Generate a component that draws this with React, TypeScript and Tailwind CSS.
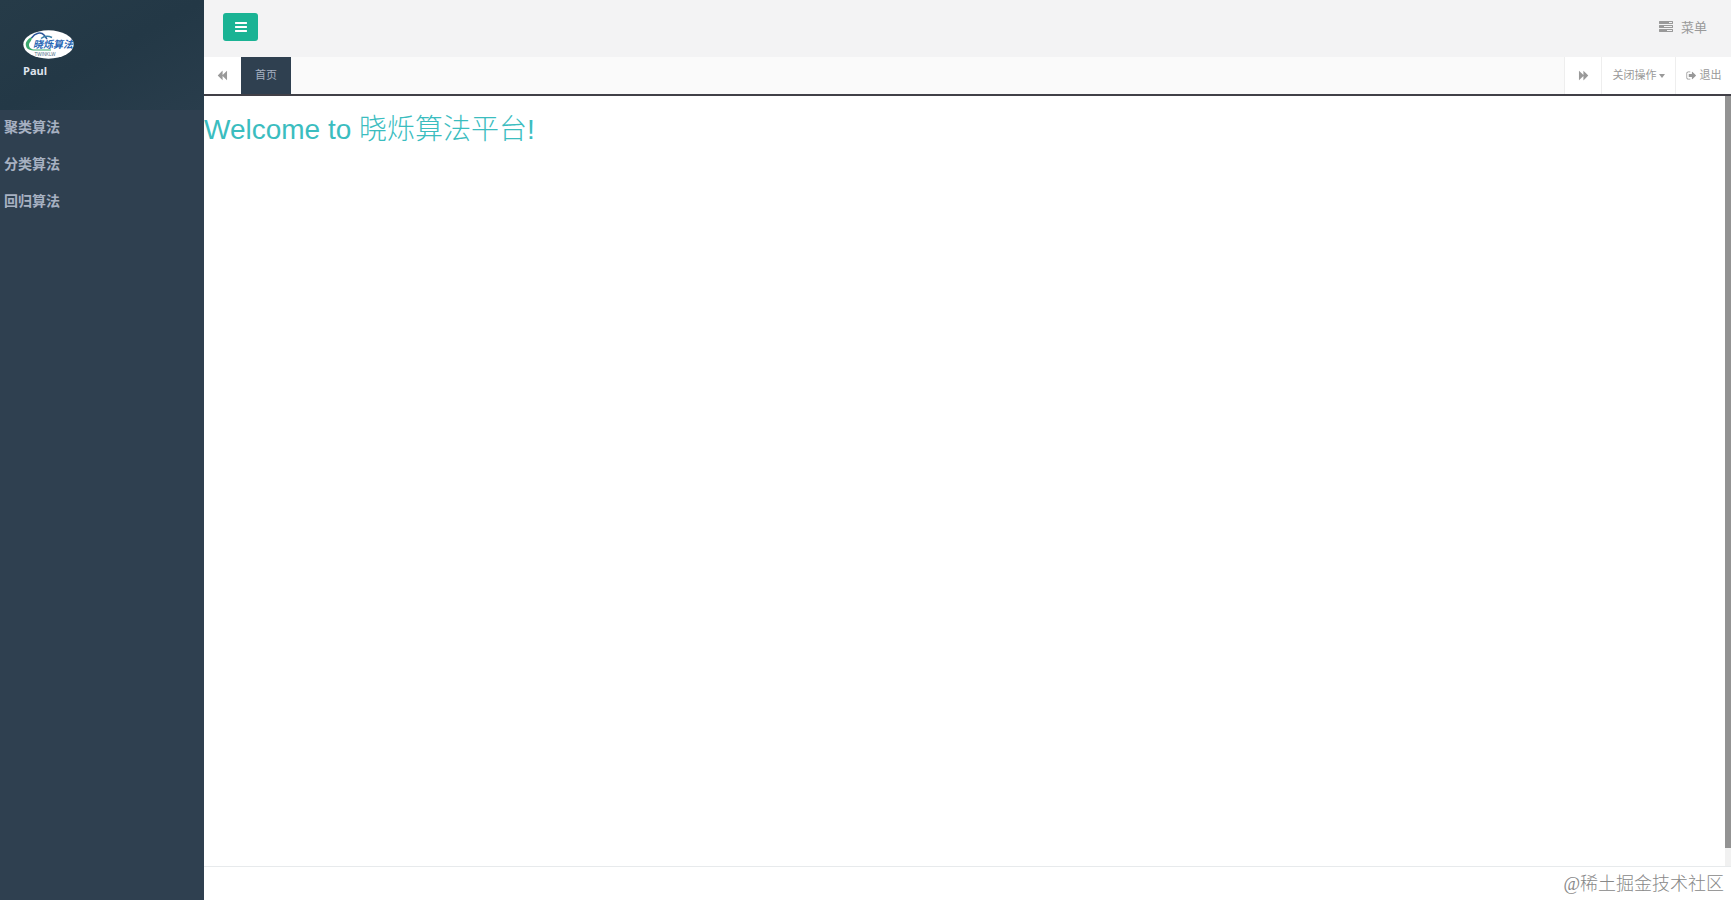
import { useState } from "react";

const MENU = ["聚类算法", "分类算法", "回归算法"];

interface IconProps {
    path: string;
    className?: string;
}

function Icon({ path, className = "size-3" }: IconProps) {
    return (
        <svg viewBox="0 0 1792 1792" fill="currentColor" className={className} aria-hidden="true">
            <path d={path} />
        </svg>
    );
}

const icons = {
    bars: "M1664 1344v128q0 26-19 45t-45 19h-1408q-26 0-45-19t-19-45v-128q0-26 19-45t45-19h1408q26 0 45 19t19 45zm0-512v128q0 26-19 45t-45 19h-1408q-26 0-45-19t-19-45v-128q0-26 19-45t45-19h1408q26 0 45 19t19 45zm0-512v128q0 26-19 45t-45 19h-1408q-26 0-45-19t-19-45v-128q0-26 19-45t45-19h1408q26 0 45 19t19 45z",
    tasks: "M1024 1408h640v-128h-640v128zm-384-512h1024v-128h-1024v128zm640-512h384v-128h-384v128zm512 832v256q0 26-19 45t-45 19h-1664q-26 0-45-19t-19-45v-256q0-26 19-45t45-19h1664q26 0 45 19t19 45zm0-512v256q0 26-19 45t-45 19h-1664q-26 0-45-19t-19-45v-256q0-26 19-45t45-19h1664q26 0 45 19t19 45zm0-512v256q0 26-19 45t-45 19h-1664q-26 0-45-19t-19-45v-256q0-26 19-45t45-19h1664q26 0 45 19t19 45z",
    backward: "M1590 150q19-19 32-13t13 32v1454q0 26-13 32t-32-13l-678-678v659q0 26-13 32t-32-13l-710-710q-19-19-19-45t19-45l710-710q19-19 32-13t13 32v659z",
    forward: "M202 1642q-19 19-32 13t-13-32v-1454q0-26 13-32t32 13l678 678v-659q0-26 13-32t32 13l710 710q19 19 19 45t-19 45l-710 710q-19 19-32 13t-13-32v-659z",
    signOut: "M704 1440q0 4 1 20t.5 26.5-3 23.5-10 19.5-20.5 6.5h-320q-119 0-203.5-84.5t-84.5-203.5v-704q0-119 84.5-203.5t203.5-84.5h320q13 0 22.5 9.5t9.5 22.5q0 4 1 20t.5 26.5-3 23.5-10 19.5-20.5 6.5h-320q-66 0-113 47t-47 113v704q0 66 47 113t113 47h312l11.5 1 11.5 3 8 5.5 7 9 2 13.5zm928-544q0 26-19 45l-544 544q-19 19-45 19t-45-19-19-45v-288h-448q-26 0-45-19t-19-45v-384q0-26 19-45t45-19h448v-288q0-26 19-45t45-19 45 19l544 544q19 19 19 45z",
};

function Logo() {
    return (
        <svg viewBox="0 0 51 29" className="h-[29px] w-[51px]" role="img" aria-label="晓烁算法">
            <ellipse cx="25.5" cy="14.5" rx="25.2" ry="14.2" fill="#fff" />
            <path d="M9 7C4 9 2 13 3 16c1 4 6 5 11 4.500h14v-1H13C9 20 6 18 6 15c0-3 3-4 3-8z" fill="#3aa76d" />
            <path d="M8.500 8C12 3 18 1.500 21 5l3 4" fill="none" stroke="#2a5599" strokeWidth="1.500" />
            <path d="M18 8.500q5-4 11-1" fill="none" stroke="#3a7fa8" strokeWidth="1.400" />
            <text x="10" y="18" fontSize="10" fontWeight="700" fontStyle="italic" fill="#2866b4" fontFamily="Noto Sans CJK SC, sans-serif">
                晓烁算法
            </text>
            <text x="11.500" y="25.500" fontSize="4.500" fill="#4d6b80" fontFamily="Liberation Sans, sans-serif">
                TWINKLW
            </text>
        </svg>
    );
}

export default function App() {
    const [collapsed, setCollapsed] = useState(false);

    return (
        <div className="flex h-screen bg-white font-['Open_Sans','Noto_Sans_CJK_SC',sans-serif] text-[#999]">
            {/* Sidebar */}
            {!collapsed && (
                <nav className="w-[204px] shrink-0 bg-[#2f4050]">
                    <div className="h-[110px] bg-linear-to-br from-[#263b48] via-[#233846] to-[#293d4c] px-[23px] pt-[30px]">
                        <Logo />
                        <strong className="mt-1 block text-[11px] leading-4 text-[#dfe4ed]">Paul</strong>
                    </div>
                    <ul>
                        {MENU.map((item) => (
                            <li key={item}>
                                <a href="#" className="block px-1 pt-1.5 pb-2.5 text-sm leading-[21px] font-semibold text-[#a7b1c2]">
                                    {item}
                                </a>
                            </li>
                        ))}
                    </ul>
                </nav>
            )}

            <div className="flex min-w-0 flex-1 flex-col">
                <header className="flex h-[57px] shrink-0 items-start justify-between bg-[#f3f3f4] pr-6 pl-[19px]">
                    <button
                        type="button"
                        aria-label="Toggle sidebar"
                        onClick={() => setCollapsed(!collapsed)}
                        className="mt-[13px] flex h-7 w-[35px] items-center justify-center rounded-[3px] bg-[#1ab394] text-white"
                    >
                        <Icon path={icons.bars} className="size-[14px]" />
                    </button>
                    <a href="#" className="mt-4 flex items-center gap-2 text-[13px] leading-[22px]">
                        <Icon path={icons.tasks} className="size-[14px]" />
                        菜单
                    </a>
                </header>

                {/* Tabs */}
                <div className="flex h-[39px] shrink-0 border-b-2 border-[#414047] bg-[#fafafa] text-[11px]">
                    <button type="button" aria-label="Scroll tabs left" className="flex w-[37px] items-center justify-center bg-white">
                        <Icon path={icons.backward} className="size-[11px]" />
                    </button>
                    <a href="#" className="flex items-center bg-[#2f4050] px-[14px] text-[#a7b1c2]">
                        首页
                    </a>
                    <div className="flex-1" />
                    <button type="button" aria-label="Scroll tabs right" className="flex w-[37px] items-center justify-center border-l border-[#eee] bg-white">
                        <Icon path={icons.forward} className="size-[11px]" />
                    </button>
                    <button type="button" className="flex w-[74px] items-center justify-center gap-0.5 border-l border-[#eee] bg-white">
                        关闭操作
                        <span className="border-x-[3px] border-t-4 border-x-transparent border-t-[#999]" />
                    </button>
                    <a href="#" className="flex w-14 items-center justify-center gap-[3px] border-l border-[#eee] bg-white">
                        <Icon path={icons.signOut} className="size-[11px]" />
                        退出
                    </a>
                </div>

                <div className="flex min-h-0 flex-1">
                    <main className="min-w-0 flex-1 pt-4">
                        <h1 className="font-['Liberation_Sans','Noto_Sans_CJK_SC',sans-serif] text-[28px] leading-9 font-light text-[#3bbdbf]">
                            Welcome to 晓烁算法平台!
                        </h1>
                    </main>
                    <div className="w-[6px] bg-[#f1f1f1] pb-[18px]">
                        <div className="h-full bg-[#939393]" />
                    </div>
                </div>

                <footer className="h-[34px] shrink-0 border-t border-[#e7eaec] pr-[7px] text-right font-['Liberation_Serif','Noto_Sans_CJK_SC',serif] text-lg leading-[34px] font-light text-[#888]">
                    @稀土掘金技术社区
                </footer>
            </div>
        </div>
    );
}
